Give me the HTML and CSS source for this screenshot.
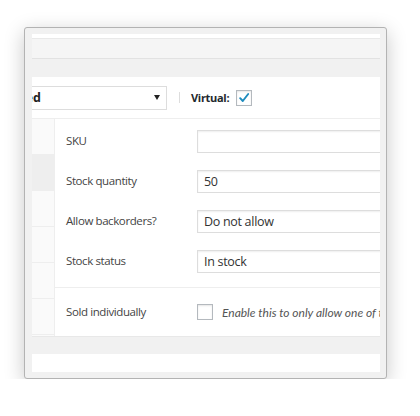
FILE: index.html
```html
<!DOCTYPE html>
<html>
<head>
<meta charset="utf-8">
<link rel="stylesheet" href="styles.css">
</head>
<body>
<div class="frame">
  <div class="viewport">
    <div class="topbox"><div class="topbar"></div></div>
    <div class="panelbox">
      <div class="typerow">
        <div class="select"><span class="select-text">Grouped</span><span class="arrow"></span></div>
        <span class="sep"></span>
        <span class="virtual">Virtual:</span>
        <span class="checkbox"><svg width="16" height="16" viewBox="0 0 16 16"><path d="M3.6 8.2 L6.6 11.4 L12.8 3.4" fill="none" stroke="#1e8cbe" stroke-width="2.2" stroke-linecap="round" stroke-linejoin="round"/></svg></span>
      </div>
      <div class="data">
        <ul class="tabs">
          <li></li>
          <li class="active"></li>
          <li></li>
          <li></li>
          <li></li>
          <li></li>
        </ul>
        <div class="options">
          <div class="group">
            <div class="field"><span class="label">SKU</span><span class="input"></span></div>
            <div class="field"><span class="label">Stock quantity</span><span class="input">50</span></div>
            <div class="field"><span class="label">Allow backorders?</span><span class="input">Do not allow</span></div>
            <div class="field"><span class="label">Stock status</span><span class="input">In stock</span></div>
          </div>
          <div class="group group-sold">
            <div class="field"><span class="label">Sold individually</span><span class="checkbox"></span><span class="desc">Enable this to only allow one of this item to be bought in a single order</span></div>
          </div>
        </div>
      </div>
    </div>
    <div class="gapband"></div>
    <div class="bottombox"></div>
  </div>
</div>
</body>
</html>
```
FILE: styles.css
```css
html, body {
  margin: 0;
  padding: 0;
  background: #ffffff;
}
body {
  font-family: "Open Sans", Lato, sans-serif;
  color: #555;
}
.frame {
  box-sizing: border-box;
  width: 363px;
  height: 352px;
  margin: 27px 0 0 24px;
  padding: 6px 6px 6px 7px;
  border: 1px solid #b3b3b3;
  border-radius: 3px;
  background: #f1f1f1;
  box-shadow: 0 5px 20px rgba(0, 0, 0, 0.22);
}
.viewport {
  width: 348px;
  height: 338px;
  overflow: hidden;
  display: flex;
  flex-direction: column;
}
.topbox {
  background: #fff;
  padding-top: 4px;
  flex: none;
}
.topbar {
  height: 19px;
  background: #f5f5f5;
  border-top: 1px solid #e9e9e9;
  border-bottom: 1px solid #e2e2e2;
}
.panelbox {
  margin-top: 18px;
  background: #fff;
  border-bottom: 1px solid #e8e8e8;
  flex: none;
}
.typerow {
  height: 41px;
  border-bottom: 1px solid #eee;
  display: flex;
  align-items: center;
}
.select {
  box-sizing: border-box;
  flex: none;
  width: 190px;
  height: 24px;
  margin-left: -55px;
  padding: 0 5px 0 9px;
  border: 1px solid #ddd;
  display: flex;
  align-items: center;
  justify-content: space-between;
  font-size: 12.5px;
  font-weight: 700;
  color: #222;
}
.arrow {
  width: 0;
  height: 0;
  border-left: 3px solid transparent;
  border-right: 3px solid transparent;
  border-top: 5px solid #222;
  margin-right: 1px;
}
.sep {
  flex: none;
  width: 1px;
  height: 11px;
  margin-left: 12px;
  background: #ddd;
}
.virtual {
  margin-left: 11px;
  font-size: 11px;
  font-weight: 700;
  letter-spacing: -0.3px;
  color: #23282d;
}
.checkbox {
  box-sizing: border-box;
  flex: none;
  width: 16px;
  height: 16px;
  border: 1px solid #b4b9be;
  background: #fff;
  box-shadow: inset 0 1px 2px rgba(0, 0, 0, 0.1);
  display: flex;
  align-items: center;
  justify-content: center;
}
.typerow .checkbox {
  margin-left: 7px;
}
.checkbox svg {
  display: block;
}
.data {
  height: 217px;
  display: flex;
}
.tabs {
  flex: none;
  width: 22px;
  margin: 0;
  padding: 0;
  list-style: none;
  background: #fafafa;
  border-right: 1px solid #eee;
}
.tabs li {
  height: 35px;
  border-bottom: 1px solid #eee;
}
.tabs li.active {
  background: #eee;
}
.options {
  flex: 1;
  min-width: 0;
  display: flex;
  flex-direction: column;
}
.group {
  padding: 11px 0 14px 11px;
  border-bottom: 1px solid #eee;
  display: flex;
  flex-direction: column;
  gap: 17px;
}
.group-sold {
  border-bottom: none;
  padding: 12px 0 12px 11px;
}
.field {
  height: 23px;
  display: flex;
  align-items: center;
  white-space: nowrap;
}
.group-sold .field {
  height: 24px;
}
.label {
  flex: none;
  width: 131px;
  margin-top: -2px;
  font-size: 11.5px;
  letter-spacing: -0.4px;
  color: #444;
}
.input {
  box-sizing: border-box;
  flex: none;
  width: 220px;
  height: 23px;
  padding-left: 6px;
  border: 1px solid #ddd;
  box-shadow: inset 0 1px 2px rgba(0, 0, 0, 0.07);
  background: #fff;
  display: flex;
  align-items: center;
  font-size: 12.5px;
  letter-spacing: -0.3px;
  color: #333;
}
.desc {
  margin-left: 9px;
  font-family: Lato, "Open Sans", sans-serif;
  font-size: 12px;
  font-style: italic;
  color: #555;
}
.gapband {
  height: 17px;
  flex: none;
}
.bottombox {
  height: 18px;
  background: #fff;
  flex: none;
}
```
